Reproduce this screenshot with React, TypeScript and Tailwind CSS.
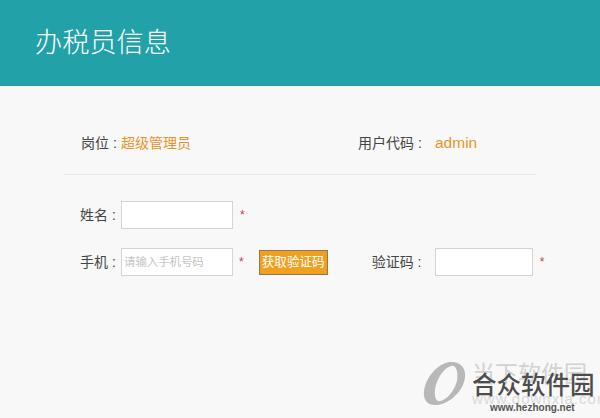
const cjk = "font-['Liberation_Sans','Noto_Sans_CJK_SC',sans-serif]";

function Star({ className }: { className: string }) {
    return <span className={"text-[12px] leading-none text-[#e0304a] " + className}>*</span>;
}

function Field({ className, placeholder }: { className: string; placeholder?: string }) {
    return (
        <input
            readOnly
            placeholder={placeholder}
            className={"h-[28px] shrink-0 border border-[#d4d4d4] bg-white px-[2px] text-[11.4px] outline-none placeholder:text-[#c4c4c4] " + className}
        />
    );
}

function Watermark() {
    return (
        <div className="absolute left-[423px] top-[358px] h-[60px] w-[177px]">
            <svg className="absolute left-0 top-[3px]" width="43" height="45" viewBox="0 0 44 46">
                <path
                    fillRule="evenodd"
                    fill="#b8b8b8"
                    d="M27 1C37 0 44 6 43 16C42 30 27 45 12 45C4 45 0 39 1 31C3 16 15 3 27 1ZM29 5C23 6 16 15 13 25C11 34 12 42 18 41C25 39 33 30 35 19C36 11 34 4 29 5Z"
                />
            </svg>
            <div className="absolute left-[49px] top-[2px] whitespace-nowrap text-[23px] leading-[28px] text-[#d2d2d2]">当下软件园</div>
            <div className="absolute left-[49px] top-[32px] whitespace-nowrap text-[15px] leading-[18px] tracking-[1px] text-[#dadada]">www.downxia.com</div>
            <div className="absolute left-[49px] top-[13px] whitespace-nowrap text-[24.5px] font-medium leading-[30px] text-[#4c4c4c]">合众软件园</div>
            <div className="absolute left-[67px] top-[44px] whitespace-nowrap text-[10px] font-bold leading-[12px] text-[#555555]">www.hezhong.net</div>
        </div>
    );
}

function App() {
    return (
        <div className={"relative h-[418px] w-[600px] overflow-hidden bg-[#f8f8f8] text-[14px] text-[#444444] " + cjk}>
            <div className="flex h-[86px] items-center bg-[#22a2a8] pl-[35px] text-[27.2px] font-light text-white">办税员信息</div>

            <div className="ml-[64px] mr-[64px] flex h-[89px] items-end border-b border-[#e8e8e8] pb-[21px] pl-[17px]">
                <div className="flex w-[277px] items-center leading-[20px]">
                    <span className="w-[40px]">岗位 :</span>
                    <span className="text-[#e8932a]">超级管理员</span>
                </div>
                <div className="flex items-center leading-[20px]">
                    <span className="w-[77px]">用户代码 :</span>
                    <span className="text-[15.5px] text-[#e8932a]">admin</span>
                </div>
            </div>

            <div className="flex items-center pl-[80px] pt-[26px]">
                <span className="w-[41px]">姓名 :</span>
                <Field className="w-[112px]" />
                <Star className="ml-[7px]" />
            </div>

            <div className="flex items-center pl-[80px] pt-[19px]">
                <span className="w-[41px]">手机 :</span>
                <Field className="w-[112px]" placeholder="请输入手机号码" />
                <Star className="ml-[6px]" />
                <button className="ml-[15px] h-[25px] w-[69px] border border-[#8f7a50] bg-[#f0a020] text-[12.6px] text-white">获取验证码</button>
                <span className="ml-[44px] w-[63px]">验证码 :</span>
                <Field className="w-[98px]" />
                <Star className="ml-[7px]" />
            </div>

            <Watermark />
        </div>
    );
}

export default App;
